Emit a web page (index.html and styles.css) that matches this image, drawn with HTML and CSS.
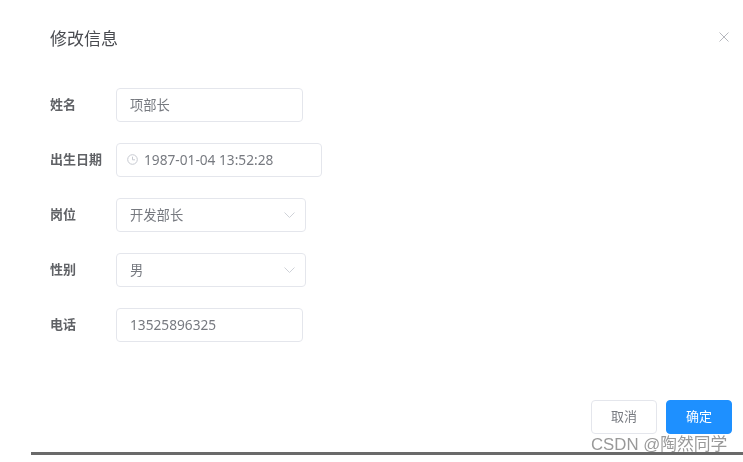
FILE: index.html
```html
<!DOCTYPE html>
<html lang="zh-CN">
<head>
<meta charset="utf-8">
<title>修改信息</title>
<link rel="stylesheet" href="styles.css">
</head>
<body>
<div class="dialog">
  <header class="dialog-header">
    <h2 class="dialog-title">修改信息</h2>
    <svg class="close-icon" width="10" height="10" viewBox="0 0 10 10"><path d="M0.5 0.5L9.5 9.5M9.5 0.5L0.5 9.5"/></svg>
  </header>
  <form class="form">
    <div class="form-row">
      <label class="form-label">姓名</label>
      <div class="control control-input"><span class="value">项部长</span></div>
    </div>
    <div class="form-row">
      <label class="form-label">出生日期</label>
      <div class="control control-date">
        <svg class="clock-icon" width="11" height="11" viewBox="0 0 11 11"><circle cx="5.5" cy="5.5" r="4.8"/><path d="M5.5 2.7V5.8H8"/></svg>
        <span class="value value-num">1987-01-04 13:52:28</span>
      </div>
    </div>
    <div class="form-row">
      <label class="form-label">岗位</label>
      <div class="control control-select"><span class="value">开发部长</span>
        <svg class="caret-icon" width="11" height="6" viewBox="0 0 11 6"><path d="M0.5 0.5L5.5 5.5L10.5 0.5"/></svg>
      </div>
    </div>
    <div class="form-row">
      <label class="form-label">性别</label>
      <div class="control control-select"><span class="value">男</span>
        <svg class="caret-icon" width="11" height="6" viewBox="0 0 11 6"><path d="M0.5 0.5L5.5 5.5L10.5 0.5"/></svg>
      </div>
    </div>
    <div class="form-row">
      <label class="form-label">电话</label>
      <div class="control control-input"><span class="value value-num">13525896325</span></div>
    </div>
  </form>
  <footer class="dialog-footer">
    <button class="btn" type="button">取消</button>
    <button class="btn btn-primary" type="button">确定</button>
  </footer>
  <div class="watermark">CSDN @陶然同学</div>
</div>
</body>
</html>
```
FILE: styles.css
```css
* { box-sizing: border-box; }
html, body { margin: 0; padding: 0; background: #fff; overflow: hidden; }
body {
  width: 743px;
  height: 462px;
  font-family: "Noto Sans", "Noto Sans CJK SC", sans-serif;
  color: #606266;
}
.dialog {
  position: relative;
  margin-left: 31px;
  width: 712px;
  height: 455px;
  border-bottom: 3px solid #6a6a6a;
  padding: 0 11px 0 19px;
  display: flex;
  flex-direction: column;
  filter: blur(0.3px);
}
.dialog-header {
  height: 88px;
  padding: 28px 0 0;
  display: flex;
  justify-content: space-between;
  align-items: flex-start;
}
.dialog-title {
  margin: 0;
  font-size: 17px;
  line-height: 22px;
  font-weight: 400;
  color: #494b50;
}
.close-icon {
  margin: 4px 3px 0 0;
  fill: none;
  stroke: #b6b8be;
  stroke-width: 1;
}
.form {
  display: flex;
  flex-direction: column;
  gap: 21px;
}
.form-row {
  display: flex;
  align-items: center;
  height: 34px;
}
.form-label {
  width: 66px;
  flex: none;
  padding-bottom: 2px;
  font-size: 13px;
  line-height: 18px;
  font-weight: 700;
  color: #606266;
}
.control {
  height: 34px;
  border: 1px solid #e4e6ec;
  border-radius: 4px;
  display: flex;
  align-items: center;
  font-size: 13.3px;
  line-height: 18px;
  color: #777a80;
  padding-left: 13px;
}
.value-num { font-size: 13.7px; }
.control-input { width: 187px; }
.control-date { width: 206px; padding-left: 10px; padding-bottom: 1px; gap: 6px; }
.control-select { width: 190px; justify-content: space-between; padding-right: 10px; }
.clock-icon { fill: none; stroke: #c6c9d0; stroke-width: 1; }
.caret-icon { fill: none; stroke: #cfd2d8; stroke-width: 1; }
.dialog-footer {
  margin-top: 58px;
  display: flex;
  justify-content: flex-end;
  gap: 9px;
}
.btn {
  width: 66px;
  height: 34px;
  padding: 0 0 2px;
  border: 1px solid #e4e6ec;
  border-radius: 4px;
  background: #fff;
  color: #777a80;
  font-family: inherit;
  font-size: 13px;
  line-height: 18px;
}
.btn-primary {
  background: #1e90ff;
  border-color: #1e90ff;
  color: #fff;
}
.watermark {
  position: absolute;
  left: 560px;
  top: 435px;
  font-family: "Liberation Sans", "Noto Sans CJK SC", sans-serif;
  font-size: 16.8px;
  line-height: 20px;
  color: #999;
  white-space: nowrap;
}
```
